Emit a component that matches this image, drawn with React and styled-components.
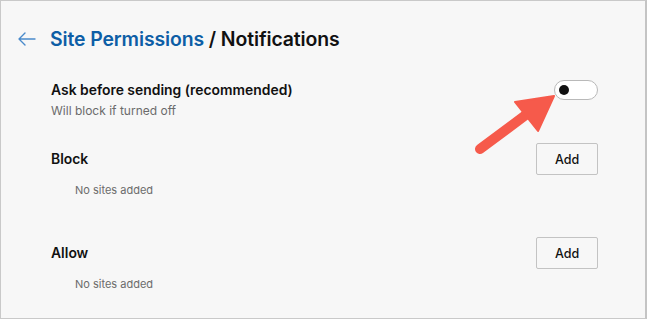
import React from 'react'
import styled, { createGlobalStyle } from 'styled-components'

const GlobalStyle = createGlobalStyle`
  html, body {
    margin: 0;
    padding: 0;
    background: #f7f7f7;
  }
  * {
    box-sizing: border-box;
  }
`

const Frame = styled.div`
  position: relative;
  width: 647px;
  height: 319px;
  background: #f7f7f7;
  border: 1px solid #c9c9c9;
  border-right: 2px solid #c4c4c4;
  font-family: Inter, "Noto Sans", sans-serif;
  color: #111;
  padding: 24px 47px 0 16px;
  overflow: hidden;
`

const Header = styled.div`
  display: flex;
  align-items: center;
  gap: 14px;
  height: 28px;
`

const BackButton = styled.button`
  display: flex;
  align-items: center;
  border: none;
  background: none;
  padding: 0;
  width: 19px;
  height: 28px;
  cursor: pointer;
`

const Title = styled.h1`
  margin: 0;
  font-size: 19.4px;
  font-weight: 600;
  line-height: 28px;
  letter-spacing: -0.1px;
  color: #111;
`

const Crumb = styled.span`
  color: #0d5ea6;
`

const Body = styled.div`
  padding-left: 34px;
`

const Row = styled.div`
  display: flex;
  justify-content: space-between;
  align-items: ${(p) => p.align || 'center'};
`

const Label = styled.div`
  font-size: 13.9px;
  font-weight: 600;
  line-height: 20px;
  color: #111;
`

const Hint = styled.div`
  font-size: ${(p) => p.size || 12}px;
  line-height: 16px;
  color: #6b6b6b;
  margin-top: ${(p) => p.top || 0}px;
  padding-left: ${(p) => p.indent || 0}px;
`

const ToggleSection = styled.div`
  margin-top: 27px;
`

const Section = styled.div`
  margin-top: ${(p) => p.top}px;
`

const Toggle = styled.button`
  position: relative;
  width: 44px;
  height: 20px;
  border-radius: 10px;
  border: 1px solid #b9b9b9;
  background: #fff;
  padding: 0;
  cursor: pointer;

  &::after {
    content: '';
    position: absolute;
    left: 4px;
    top: 4px;
    width: 10px;
    height: 10px;
    border-radius: 50%;
    background: #111;
  }
`

const AddButton = styled.button`
  width: 62px;
  height: 32px;
  border: 1px solid #c3c3c3;
  border-radius: 2px;
  background: #f7f7f7;
  font-family: Inter, "Noto Sans", sans-serif;
  font-size: 12.5px;
  font-weight: 500;
  color: #111;
  cursor: pointer;
`

const Pointer = styled.svg`
  position: absolute;
  left: 470px;
  top: 88px;
  pointer-events: none;
`

const BackArrow = () => (
  <svg width="19" height="14" viewBox="0 0 19 14" fill="none">
    <path d="M18 7H2M8 1L2 7l6 6" stroke="#4a8acb" strokeWidth="1.4" strokeLinecap="round" strokeLinejoin="round" />
  </svg>
)

const SiteList = ({ label, top }) => (
  <Section top={top}>
    <Row>
      <Label>{label}</Label>
      <AddButton>Add</AddButton>
    </Row>
    <Hint top={7} indent={24} size={11}>No sites added</Hint>
  </Section>
)

const App = () => {
  return (
    <>
      <GlobalStyle />
      <Frame>
        <Header>
          <BackButton aria-label="Back">
            <BackArrow />
          </BackButton>
          <Title>
            <Crumb>Site Permissions</Crumb> / Notifications
          </Title>
        </Header>
        <Body>
          <ToggleSection>
            <Row align="flex-start">
              <div>
                <Label>Ask before sending (recommended)</Label>
                <Hint top={3}>Will block if turned off</Hint>
              </div>
              <Toggle aria-label="Ask before sending" />
            </Row>
          </ToggleSection>
          <SiteList label="Block" top={24} />
          <SiteList label="Allow" top={39} />
        </Body>
        <Pointer width="90" height="70" viewBox="470 88 90 70">
          <line x1="479" y1="148" x2="526" y2="113" stroke="#f65a4b" strokeWidth="10" strokeLinecap="round" />
          <polygon points="553,95 514,101 537,130" fill="#f65a4b" stroke="#f65a4b" strokeWidth="2" strokeLinejoin="round" />
        </Pointer>
      </Frame>
    </>
  )
}

export default App
